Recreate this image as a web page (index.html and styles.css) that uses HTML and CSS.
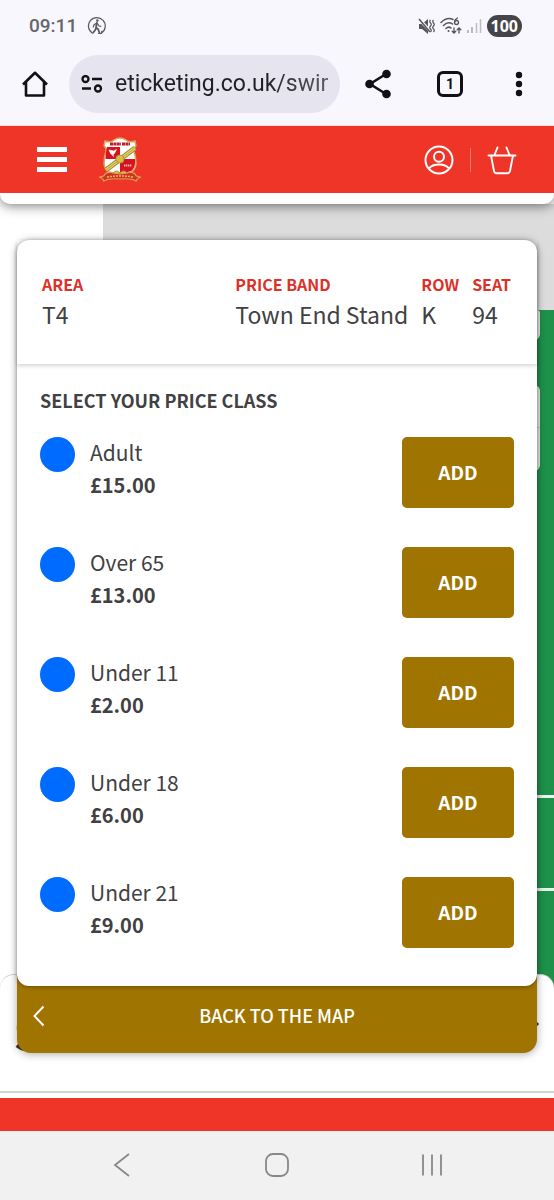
FILE: index.html
```html
<!DOCTYPE html>
<html lang="en">
<head>
<meta charset="utf-8">
<meta name="viewport" content="width=device-width, initial-scale=1">
<title>Select your price class</title>
<link rel="stylesheet" href="styles.css">
</head>
<body>
<div class="status">
  <span class="time">09:11</span>
  <svg class="walk" width="20" height="20" viewBox="0 0 20 20" fill="none" stroke="#5b5b60" stroke-width="1.2" stroke-linecap="round" stroke-linejoin="round">
    <path d="M5.500 17.200A8.400 8.400 0 1 1 14.500 17"/>
    <circle cx="10.300" cy="4.600" r="1.300" fill="#5b5b60" stroke="none"/>
    <path d="M9.800 7 9 11.500l2.300 2 1.200 3.500M9.200 11.500 8.200 14 6.300 16.500" stroke-width="1.800"/>
    <path d="M9.800 7 7 8.800 6.300 11M10.300 7.500l1.500 2.200 2 .7"/>
    <path d="m11.500 17.500 2.800-.2.600-2.200"/>
  </svg>
  <div class="signals">
    <svg width="17" height="17" viewBox="0 0 17 17">
      <path d="M1 6h3l6-5v15l-6-5H1z" fill="#55555a"/>
      <path d="m1 1 14 15" stroke="#f8f7fd" stroke-width="3"/>
      <path d="m1 1 11 13" stroke="#55555a" stroke-width="1.500"/>
      <path d="M12.500 2q-1.500 1.500 0 3t0 3 0 3 0 3M15.500 2q-1.500 1.500 0 3t0 3 0 3 0 3" fill="none" stroke="#55555a" stroke-width="1.200"/>
    </svg>
    <svg width="22" height="18" viewBox="0 0 22 18" fill="none" stroke="#55555a" stroke-width="1.500" stroke-linecap="round">
      <path d="M1 5.500Q7-.5 13 2.500M3.500 8.500Q8 4 12.500 7M6 11.500Q8.500 9 11 11"/>
      <circle cx="8.500" cy="14" r="1" fill="#55555a" stroke="none"/>
      <path d="M17.500 1q-3 1.500-3 4.500" stroke-width="1.300"/>
      <circle cx="16.500" cy="5.500" r="2" stroke-width="1.300"/>
      <path d="M14 11v5m-1.800-1.800L14 16l1.800-1.800M19 16v-5m-1.800 1.800L19 11l1.800 1.800" stroke-width="1.300"/>
    </svg>
    <svg width="15" height="16" viewBox="0 0 15 16" stroke-width="1.500">
      <path d="M1 12v3M5 9v6" stroke="#a5a5a9"/><path d="M9.500 5v10M13.500 1v14" stroke="#bdbdc1"/>
    </svg>
    <span class="battery">100</span>
  </div>
</div>

<div class="toolbar">
  <button class="tool" aria-label="Home">
    <svg width="28" height="28" viewBox="0 0 28 28" fill="none" stroke="#111115" stroke-width="2.600" stroke-linejoin="round"><path d="M2 14.500 14 2.800l12 11.700M5 12v13.500h18V12"/></svg>
  </button>
  <div class="address">
    <svg width="22" height="18" viewBox="0 0 22 18" fill="none" stroke="#111115" stroke-width="2.300"><circle cx="4.500" cy="4" r="3"/><path d="M11 4h10M1 13.500h9"/><circle cx="17" cy="13.500" r="3"/></svg>
    <input class="url" type="text" aria-label="Address" value="eticketing.co.uk/swir">
  </div>
  <button class="tool share" aria-label="Share">
    <svg width="28" height="30" viewBox="0 0 28 30" fill="#111115"><path d="M22 5 6 15l16 10" fill="none" stroke="#111115" stroke-width="2.600"/><circle cx="22.500" cy="5" r="4.300"/><circle cx="5.500" cy="15" r="4.300"/><circle cx="22.500" cy="25" r="4.300"/></svg>
  </button>
  <button class="tool tabs" aria-label="Tabs">1</button>
  <button class="tool" aria-label="More">
    <svg width="8" height="26" viewBox="0 0 8 26" fill="#111115"><circle cx="4" cy="4" r="3.200"/><circle cx="4" cy="13" r="3.200"/><circle cx="4" cy="22" r="3.200"/></svg>
  </button>
</div>

<header class="site">
  <div class="site-bar">
    <button class="menu" aria-label="Menu"><span></span><span></span><span></span></button>
    <a class="crest" href="#" aria-label="Club home">
      <svg width="44" height="46" viewBox="0 0 44 46">
        <path d="M7 4q6 2 9-1 3-2 6-2t6 2q3 3 9 1l1 5q-3 2-2 5 2 6 2 13-1 8-8 9H14q-7-1-8-9 0-7 2-13 1-3-2-5z" fill="#fff" stroke="#d9a35d" stroke-width="1.500"/>
        <path d="M9 10h13v12H7.500q0-6 1.500-12M22 22h15v5q-1 7-7 8h-8z" fill="#d9121f"/>
        <path d="M12 7h11M24 7h8" stroke="#b8202a" stroke-width="3" stroke-dasharray="3 .4"/>
        <path d="m11 13 3 .5 1.500.5 3-1.500-1.500 3-2 2.500.5 1.500-1-1.500-2-1.500z" fill="#fff" stroke="#fff" stroke-width=".6"/>
        <path d="M8 33 37 11" stroke="#9d862b" stroke-width="5"/>
        <path d="M8 33 37 11" stroke="#e2d36b" stroke-width="3"/>
        <path d="M8 33 37 11" stroke="#b6a441" stroke-width="1"/>
        <circle cx="22" cy="22" r="4" fill="#d4bd4d" stroke="#b39b36"/>
        <path d="M26 28.500h8" stroke="#f5b9b0" stroke-width="2" stroke-dasharray="1.400 .6"/>
        <path d="M1 40q5 0 6-3 4-3 8-1l7 1 7-1q4-2 8 1 1 3 6 3-4 1-5 4-5-3-16-2-11-1-16 2-1-3-5-4" fill="#cc3524" stroke="#dda14b" stroke-width="1.200"/>
        <path d="M15 36q3-4 7 0 4-4 7 0" fill="#dfb75a" stroke="#b98d37"/>
        <path d="M9 40q13-2 26 0" fill="none" stroke="#efb35b" stroke-width="1.500" stroke-dasharray="2 1"/>
      </svg>
    </a>
    <div class="account">
      <a href="#" aria-label="Account"><svg width="30" height="30" viewBox="0 0 30 30" fill="none" stroke="#fff" stroke-width="2"><circle cx="15" cy="15" r="13.500"/><circle cx="15" cy="11.800" r="5"/><path d="M5 23.500q3-4 10-4t10 4"/></svg></a>
      <a class="basket" href="#" aria-label="Basket"><svg width="30" height="30" viewBox="0 0 30 30" fill="none" stroke="#fff" stroke-width="1.900" stroke-linejoin="round" stroke-linecap="round"><path d="M1.500 10.500h27M4 10.500 7 26q.5 2.300 2.500 2.300h11q2 0 2.500-2.300l3-15.500M7.500 10l3-7.500M22.500 10l-3-7.500"/></svg></a>
    </div>
  </div>
</header>

<main class="stage">
  <div class="backdrop" aria-hidden="true">
    <div class="map">
      <div class="pitch"><span class="knob"></span><span class="zoomer"></span><span class="lines"></span></div>
    </div>
    <div class="sheet">
      <span class="sheet-initial">S</span>
      <svg width="22" height="12" viewBox="0 0 22 12" fill="none" stroke="#333" stroke-width="3"><path d="m2 1 9 9 9-9"/></svg>
    </div>
  </div>

  <section class="dialog">
    <div class="card">
      <dl class="seat">
        <div><dt>AREA</dt><dd>T4</dd></div>
        <div><dt>PRICE BAND</dt><dd>Town End Stand</dd></div>
        <div><dt>ROW</dt><dd>K</dd></div>
        <div><dt>SEAT</dt><dd>94</dd></div>
      </dl>
      <div class="prices">
        <h1>SELECT YOUR PRICE CLASS</h1>
        <ul>
          <li><span class="dot"></span><p><span>Adult</span><strong>£15.00</strong></p><button class="add">ADD</button></li>
          <li><span class="dot"></span><p><span>Over 65</span><strong>£13.00</strong></p><button class="add">ADD</button></li>
          <li><span class="dot"></span><p><span>Under 11</span><strong>£2.00</strong></p><button class="add">ADD</button></li>
          <li><span class="dot"></span><p><span>Under 18</span><strong>£6.00</strong></p><button class="add">ADD</button></li>
          <li><span class="dot"></span><p><span>Under 21</span><strong>£9.00</strong></p><button class="add">ADD</button></li>
        </ul>
      </div>
    </div>
    <button class="back">
      <svg width="12" height="22" viewBox="0 0 12 22" fill="none" stroke="#fff" stroke-width="2"><path d="m10.500 1.500-9 9.500 9 9.500"/></svg>
      <span>BACK TO THE MAP</span>
    </button>
  </section>
</main>

<div class="footer-strip"></div>
<nav class="system" aria-label="System">
  <button aria-label="Back"><svg width="24" height="24" viewBox="0 0 24 24" fill="none" stroke="#88888a" stroke-width="1.800"><path d="M19 1 5 12l14 11"/></svg></button>
  <button aria-label="Home"><svg width="24" height="24" viewBox="0 0 24 24" fill="none" stroke="#88888a" stroke-width="1.800"><rect x="1" y="1" width="22" height="22" rx="7"/></svg></button>
  <button aria-label="Recents"><svg width="24" height="24" viewBox="0 0 24 24" fill="none" stroke="#88888a" stroke-width="1.800"><path d="M3 1.500v21M12 1.500v21M21 1.500v21"/></svg></button>
</nav>
</body>
</html>
```
FILE: styles.css
```css
* { box-sizing: border-box; }
body {
  margin: 0;
  min-height: 100vh;
  display: flex;
  flex-direction: column;
  background: #fff;
  color: #414143;
  font-family: "Noto Sans CJK SC", "Noto Sans", sans-serif;
}
button { border: 0; padding: 0; background: none; font: inherit; color: inherit; }
svg { display: block; flex: none; }
ul, dl, dd, p, h1 { margin: 0; padding: 0; }

.status {
  display: flex;
  align-items: center;
  gap: 10px;
  height: 52px;
  padding: 0 32px 0 29px;
  background: #f8f7fd;
}
.time { font: 500 19px/24px Roboto, sans-serif; color: #66666b; }
.signals { display: flex; align-items: center; gap: 5px; margin-left: auto; }
.battery {
  padding: 0 4px;
  border-radius: 11px;
  background: #454549;
  color: #fff;
  font: bold 16px/22px "Open Sans", sans-serif;
}

.toolbar {
  position: relative;
  z-index: 2;
  display: flex;
  align-items: center;
  height: 74px;
  padding: 0 31px 10px 21px;
  border-bottom: 1px solid #fbdde0;
  background: #f8f7fd;
}
.address {
  display: flex;
  align-items: center;
  gap: 12px;
  flex: 1;
  min-width: 0;
  height: 58px;
  margin: 0 24px 0 20px;
  padding: 0 12px;
  border-radius: 29px;
  background: #e6e5ef;
}
.url {
  flex: 1;
  min-width: 0;
  padding: 0;
  border: 0;
  background: linear-gradient(90deg, #1f1f24 70%, #5c5c64);
  -webkit-background-clip: text;
  background-clip: text;
  color: transparent;
  font: 23px/32px Roboto, sans-serif;
}
.tool { display: grid; place-items: center; }
.tabs {
  width: 26px;
  height: 26px;
  margin: 0 52px 0 45px;
  border: 3px solid #111115;
  border-radius: 6px;
  font: bold 14px/16px Roboto, sans-serif;
  color: #111115;
}

.site {
  position: relative;
  z-index: 1;
  padding-bottom: 11px;
  border-radius: 0 0 10px 10px;
  background: #fff;
  box-shadow: 0 2px 12px rgba(0, 0, 0, .5);
}
.site-bar {
  display: flex;
  align-items: center;
  height: 67px;
  padding: 0 37px;
  background: #ef3527;
}
.menu { display: grid; gap: 5px; width: 30px; }
.menu span { height: 5px; background: #fff; }
.crest { margin-left: 31px; }
.account { display: flex; align-items: center; gap: 16px; margin-left: auto; }
.basket { padding-left: 17px; background: linear-gradient(#f4796d, #f4796d) left center / 1px 24px no-repeat; }

.stage { display: grid; flex: 1; }
.backdrop, .dialog { grid-area: 1 / 1; min-width: 0; }
.backdrop { display: flex; flex-direction: column; padding-bottom: 5px; overflow: hidden; }
.map {
  flex: 1;
  display: flex;
  justify-content: flex-end;
  padding-top: 106px;
  background: linear-gradient(90deg, #fff 103px, #dcdcdc 103px);
  background-size: 100% 106px;
  background-repeat: no-repeat;
}
.pitch {
  display: flex;
  flex-direction: column;
  align-items: flex-start;
  width: 24px;
  padding-left: 4px;
  background: #1d9049;
}
.knob { width: 6px; height: 30px; border-radius: 0 6px 12px 0; background: #e9efeb; }
.zoomer {
  width: 6px;
  height: 86px;
  margin-top: 45px;
  border-radius: 0 6px 6px 0;
  background: linear-gradient(#e4ebe7 42px, #c4cfc8 42px, #c4cfc8 43px, #e4ebe7 43px);
}
.lines {
  align-self: stretch;
  height: 96px;
  margin-top: 324px;
  border: solid #e8f3ec;
  border-width: 3px 0;
}
.sheet {
  display: flex;
  align-items: center;
  justify-content: space-between;
  height: 119px;
  margin-top: -14px;
  padding: 0 14px;
  border: solid #cfd3d1;
  border-width: 1px 0 2px;
  border-radius: 14px 14px 0 0;
  background: #fff;
}
.sheet-initial { color: #333; font-size: 40px; line-height: 40px; font-weight: bold; }
.sheet svg { margin-bottom: 10px; }

.dialog {
  position: relative;
  margin: 36px 17px 45px;
  align-self: start;
  border-radius: 14px;
  background: #a07400;
  box-shadow: 0 1px 8px rgba(0, 0, 0, .35);
}
.card { border-radius: 12px; background: #fff; box-shadow: 0 1px 4px rgba(0, 0, 0, .3); }
.seat {
  display: grid;
  grid-template-columns: 1fr auto auto auto;
  column-gap: 13px;
  padding: 32px 26px 32px 25px;
  box-shadow: 0 2px 4px rgba(0, 0, 0, .16);
}
.seat dt { color: #dc3028; font-size: 16px; line-height: 24px; font-weight: bold; }
.seat dd { font-size: 23px; line-height: 36px; }

.prices { padding: 21px 23px 38px; }
.prices h1 { font-size: 18px; line-height: 30px; font-weight: bold; }
.prices ul { display: grid; gap: 39px; margin-top: 22px; list-style: none; }
.prices li { display: flex; align-items: flex-start; gap: 15px; }
.dot { width: 35px; height: 35px; border-radius: 50%; background: #006bff; }
.prices p { flex: 1; }
.prices p span { display: block; font-size: 21px; line-height: 31px; }
.prices strong { display: block; font-size: 20px; line-height: 34px; font-weight: bold; }
.add {
  width: 112px;
  height: 71px;
  padding-bottom: 2px;
  border-radius: 5px;
  background: #a07400;
  color: #fff;
  font-size: 19px;
  font-weight: bold;
}
.back {
  display: flex;
  align-items: center;
  width: 100%;
  height: 67px;
  padding: 0 16px 8px;
  color: #fff;
  font-size: 18px;
  font-weight: 500;
}
.back span { flex: 1; padding: 0 12px 2px 0; }

.footer-strip { height: 33px; background: #ef3527; }
.system {
  display: flex;
  justify-content: space-around;
  align-items: center;
  height: 69px;
  padding: 0 44px 2px;
  background: #f1f1f1;
}
```
